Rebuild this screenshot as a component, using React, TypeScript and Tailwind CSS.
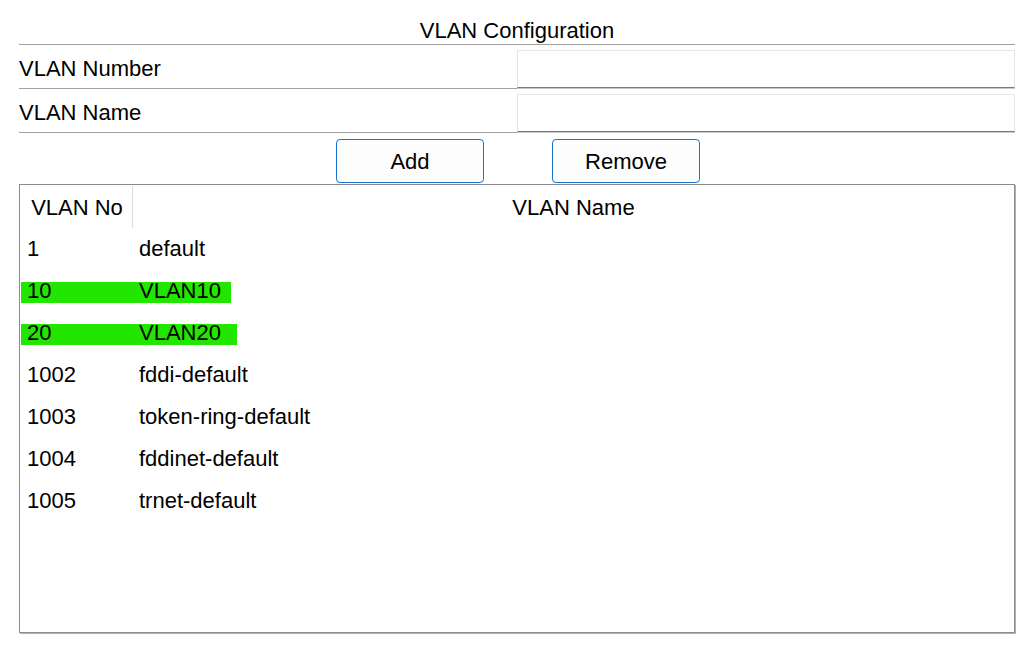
import React from "react";

const rows: { no: string; name: string; hl?: number }[] = [
  { no: "1", name: "default" },
  { no: "10", name: "VLAN10", hl: 210 },
  { no: "20", name: "VLAN20", hl: 216 },
  { no: "1002", name: "fddi-default" },
  { no: "1003", name: "token-ring-default" },
  { no: "1004", name: "fddinet-default" },
  { no: "1005", name: "trnet-default" },
];

export default function App() {
  return (
    <div
      className="w-[1032px] h-[651px] bg-white text-black text-[22px] overflow-hidden"
      style={{ fontFamily: '"Liberation Sans", Arial, sans-serif' }}
    >
      <div className="ml-[19px] w-[996px] flex flex-col">
        {/* Title */}
        <div className="pt-[18px] pb-[1px] leading-[25px] text-center border-b border-[#a0a0a0]">
          VLAN Configuration
        </div>

        {/* VLAN Number row */}
        <div className="flex h-[44px]">
          <div className="w-[498px] h-[44px] border-b border-[#a0a0a0] pt-[11px] leading-[25px]">
            VLAN Number
          </div>
          <div className="flex-1 pt-[5px]">
            <div className="h-[38px] bg-white border border-[#e6e6e6] border-b-[#7a7a7a] shadow-[0_1px_0_#c8c8c8]" />
          </div>
        </div>

        {/* VLAN Name row */}
        <div className="flex h-[44px]">
          <div className="w-[498px] h-[44px] border-b border-[#a0a0a0] pt-[11px] leading-[25px]">
            VLAN Name
          </div>
          <div className="flex-1 pt-[5px]">
            <div className="h-[38px] bg-white border border-[#e6e6e6] border-b-[#7a7a7a] shadow-[0_1px_0_#c8c8c8]" />
          </div>
        </div>

        {/* Buttons */}
        <div className="flex gap-[68px] pl-[317px] mt-[6px]">
          <button className="w-[148px] h-[44px] rounded-[4px] border border-[#1a73cc] bg-[#fdfdfd] text-[22px] leading-[25px]">
            Add
          </button>
          <button className="w-[148px] h-[44px] rounded-[4px] border border-[#1a73cc] bg-[#fdfdfd] text-[22px] leading-[25px]">
            Remove
          </button>
        </div>

        {/* Table */}
        <div className="mt-[1px] h-[449px] border border-[#8c8c8c] bg-white shadow-[1px_1px_0_#b0b0b8]">
          <div className="flex h-[42px] items-center">
            <div className="w-[112px] h-[42px] flex items-center justify-center pt-[2px] pl-[2px]">
              VLAN No
            </div>
            <div className="w-px h-[42px] bg-[#dcdcdc] mt-[2px]" />
            <div className="flex-1 flex items-center justify-center pt-[2px]">
              VLAN Name
            </div>
          </div>
          {rows.map((r) => (
            <div key={r.no} className="relative flex h-[42px] items-center">
              {r.hl ? (
                <div
                  className="absolute left-[1px] top-[13px] h-[21px] bg-[#22e500]"
                  style={{ width: r.hl }}
                />
              ) : null}
              <div className="relative w-[119px] pl-[7px]">{r.no}</div>
              <div className="relative">{r.name}</div>
            </div>
          ))}
        </div>
      </div>
    </div>
  );
}
